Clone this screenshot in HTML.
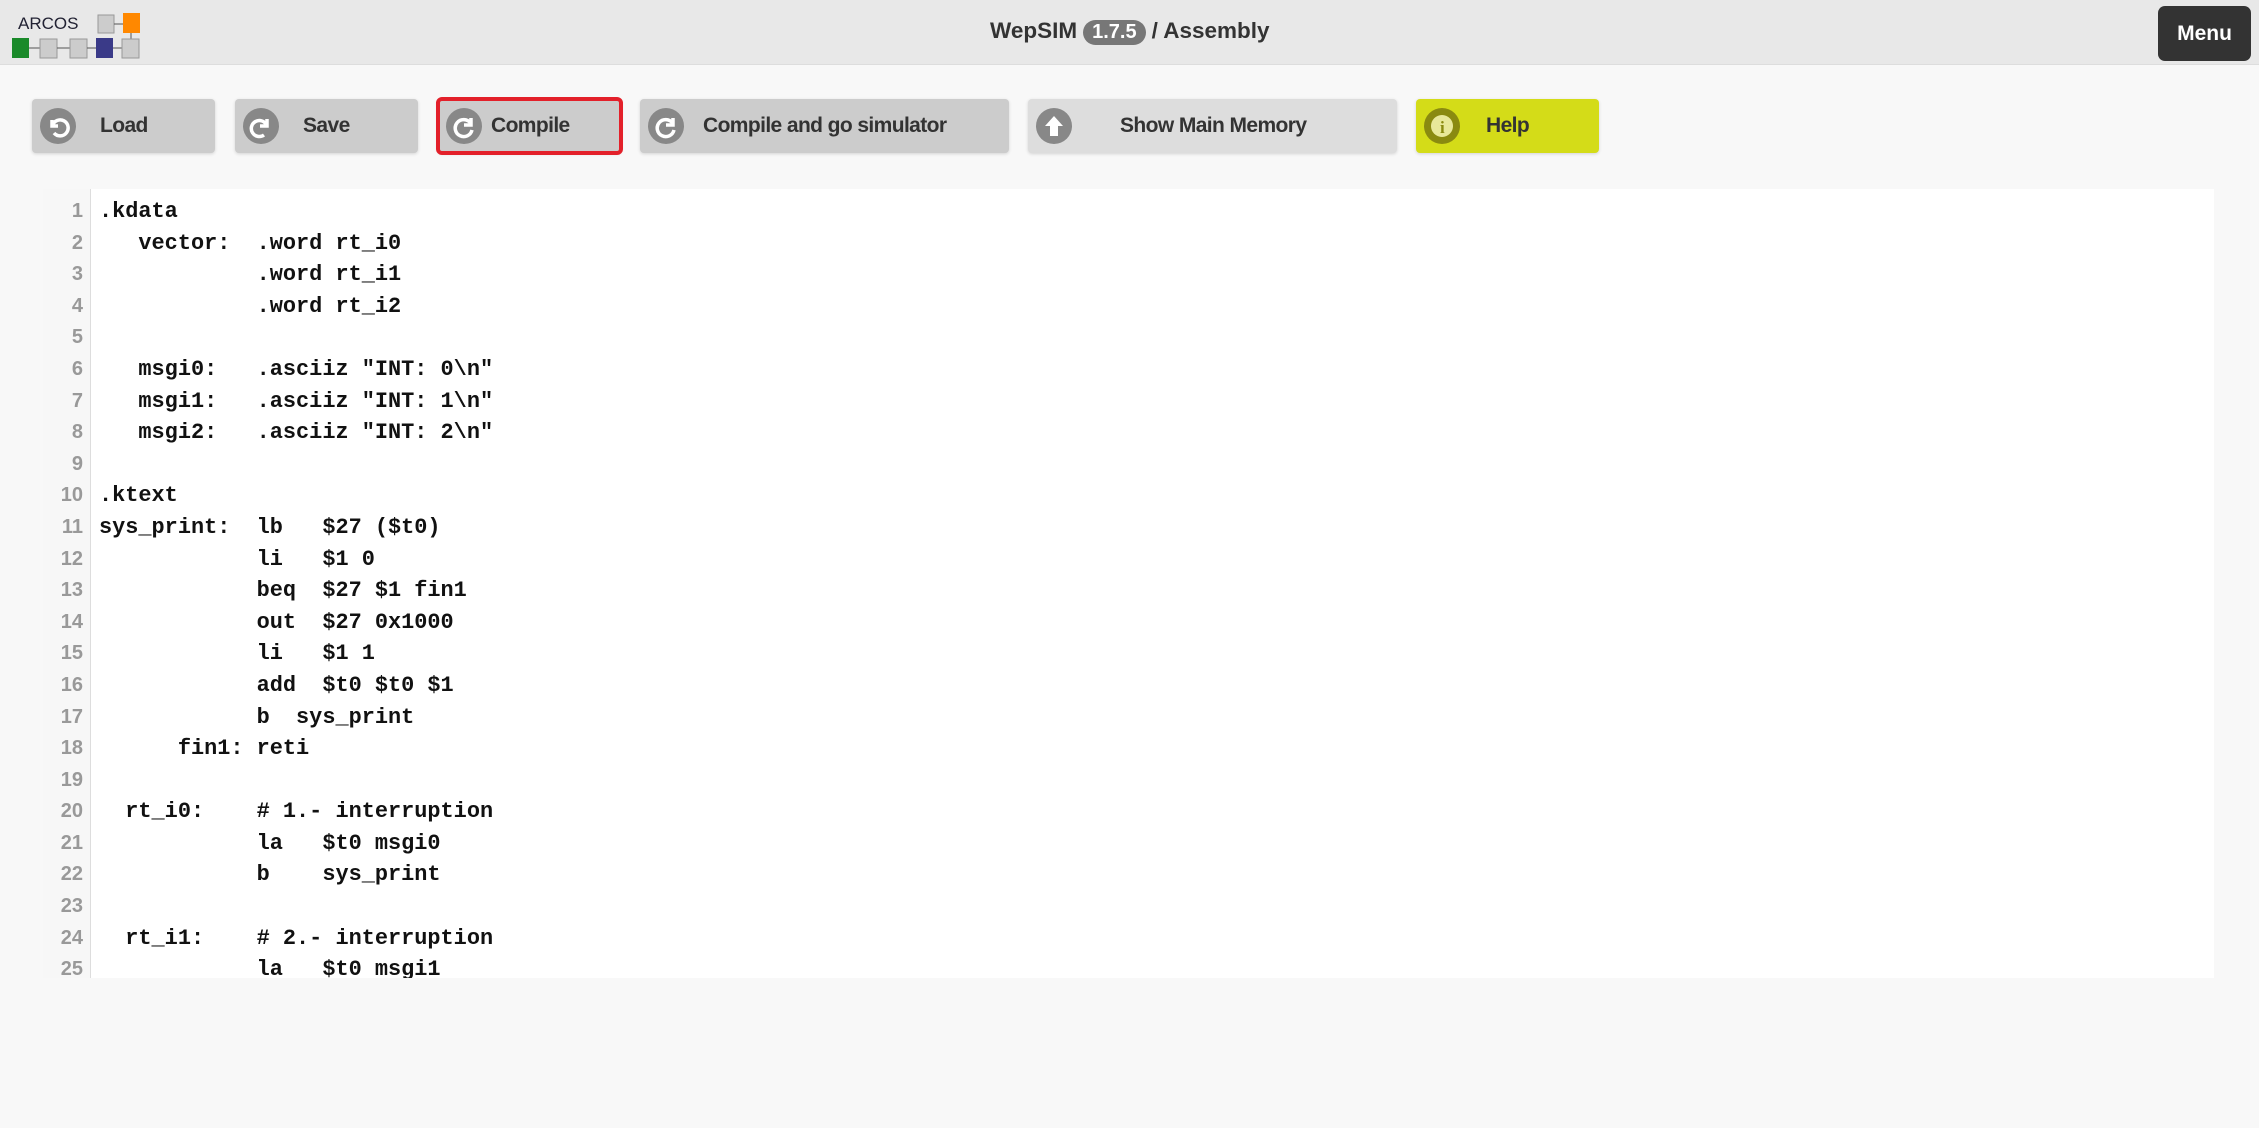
<!DOCTYPE html>
<html><head><meta charset="utf-8"><style>
html,body{margin:0;padding:0;width:2259px;height:1128px;overflow:hidden;background:#f8f8f8;font-family:"Liberation Sans",Arial,sans-serif}
.hdr{position:absolute;left:0;top:0;width:2259px;height:64px;background:#e8e8e8;border-bottom:1px solid #ddd}
.title{position:absolute;left:990px;top:18px;font-weight:bold;font-size:22.5px;color:#333;white-space:nowrap}
.badge{display:inline-block;background:#777;color:#fff;border-radius:13px;padding:1px 9px;font-size:20px;margin:0 6px}
.menu{position:absolute;left:2158px;top:6px;width:93px;height:55px;background:#333;border-radius:7px;color:#fff;font-weight:bold;font-size:21px;line-height:55px;text-align:center}
.btn{position:absolute;top:99px;height:54px;background:#ccc;border-radius:4px;font-family:"Liberation Sans Narrow","Liberation Sans",sans-serif;font-weight:bold;font-size:21px;letter-spacing:-0.6px;color:#333;line-height:54px;box-shadow:0 1px 3px rgba(0,0,0,.15)}
.ic{position:absolute;left:8px;top:9px;width:36px;height:36px;border-radius:50%;background:#888}
.ic svg{position:absolute;left:0;top:0}
.ed{position:absolute;left:43px;top:189px;width:2171px;height:789px;background:#fff;overflow:hidden}
.gut{position:absolute;left:0;top:0;width:47px;height:789px;background:#f7f7f7;border-right:1px solid #ddd}
pre{position:absolute;left:56px;top:7px;margin:0;font-family:"Liberation Mono",monospace;font-weight:bold;font-size:21.9px;line-height:31.6px;color:#111}
</style></head><body>
<div class="hdr">
<svg width="150" height="60" style="position:absolute;left:10px;top:5px">
<text x="8" y="24" font-size="17" font-family="Liberation Sans" fill="#223">ARCOS</text>
<rect x="88" y="10" width="16" height="18" fill="#ccc" stroke="#999"/>
<line x1="104" y1="19" x2="113" y2="19" stroke="#555"/>
<rect x="113" y="8" width="17" height="20" fill="#f80"/>
<line x1="121" y1="28" x2="121" y2="36" stroke="#555"/>
<rect x="2" y="33" width="17" height="20" fill="#1a8a2a"/>
<line x1="19" y1="43" x2="30" y2="43" stroke="#555"/>
<rect x="30" y="34" width="17" height="19" fill="#ccc" stroke="#999"/>
<line x1="47" y1="43" x2="60" y2="43" stroke="#555"/>
<rect x="60" y="34" width="17" height="19" fill="#ccc" stroke="#999"/>
<line x1="77" y1="43" x2="86" y2="43" stroke="#555"/>
<rect x="86" y="33" width="17" height="20" fill="#3a3a88"/>
<line x1="103" y1="43" x2="112" y2="43" stroke="#555"/>
<rect x="112" y="34" width="17" height="19" fill="#ccc" stroke="#999"/>
</svg>
<div class="title">WepSIM<span class="badge">1.7.5</span>/ Assembly</div>
<div class="menu">Menu</div>
</div>

<div class="btn" style="left:32px;width:183px"><div class="ic"><svg width="36" height="36"><path d="M12 12 L12 18 L18 18 M12.5 17.5 A8 8 0 1 1 14 25" fill="none" stroke="#fff" stroke-width="3.5"/></svg></div><span style="position:absolute;left:68px">Load</span></div>
<div class="btn" style="left:235px;width:183px"><div class="ic"><svg width="36" height="36"><path d="M24 11 L24 18 L17 18 M23.5 17 A8 8 0 1 0 21 27" fill="none" stroke="#fff" stroke-width="3.5"/></svg></div><span style="position:absolute;left:68px">Save</span></div>
<div class="btn" style="left:438px;width:183px;outline:4px solid #e3202a;outline-offset:-2px"><div class="ic"><svg width="36" height="36"><path d="M25 10 L25 17 L18 17 M24.5 15 A8.5 8.5 0 1 0 26 22" fill="none" stroke="#fff" stroke-width="3.5"/></svg></div><span style="position:absolute;left:53px">Compile</span></div>
<div class="btn" style="left:640px;width:369px"><div class="ic"><svg width="36" height="36"><path d="M25 10 L25 17 L18 17 M24.5 15 A8.5 8.5 0 1 0 26 22" fill="none" stroke="#fff" stroke-width="3.5"/></svg></div><span style="position:absolute;left:63px">Compile and go simulator</span></div>
<div class="btn" style="left:1028px;width:369px;background:#ddd"><div class="ic"><svg width="36" height="36"><path d="M18 8 L9 18 L14 18 L14 28 L22 28 L22 18 L27 18 Z" fill="#fff"/></svg></div><span style="position:absolute;left:92px">Show Main Memory</span></div>
<div class="btn" style="left:1416px;width:183px;background:#d4dc18"><div class="ic" style="background:#8a8a10"><svg width="36" height="36"><circle cx="18" cy="18" r="11" fill="#e8e89a"/><text x="18" y="25" text-anchor="middle" font-size="17" font-weight="bold" font-family="Liberation Serif" fill="#8a8a10">i</text></svg></div><span style="position:absolute;left:70px">Help</span></div>

<div class="ed">
<div class="gut"></div>
<div style="position:absolute;left:0;top:7px;line-height:31.6px;width:40px;text-align:right;color:#999;font-size:20px;font-weight:bold">1<br>2<br>3<br>4<br>5<br>6<br>7<br>8<br>9<br>10<br>11<br>12<br>13<br>14<br>15<br>16<br>17<br>18<br>19<br>20<br>21<br>22<br>23<br>24<br>25</div>
<pre>.kdata
   vector:  .word rt_i0
            .word rt_i1
            .word rt_i2

   msgi0:   .asciiz "INT: 0\n"
   msgi1:   .asciiz "INT: 1\n"
   msgi2:   .asciiz "INT: 2\n"

.ktext
sys_print:  lb   $27 ($t0)
            li   $1 0
            beq  $27 $1 fin1
            out  $27 0x1000
            li   $1 1
            add  $t0 $t0 $1
            b  sys_print
      fin1: reti

  rt_i0:    # 1.- interruption
            la   $t0 msgi0
            b    sys_print

  rt_i1:    # 2.- interruption
            la   $t0 msgi1</pre>
</div>
</body></html>
